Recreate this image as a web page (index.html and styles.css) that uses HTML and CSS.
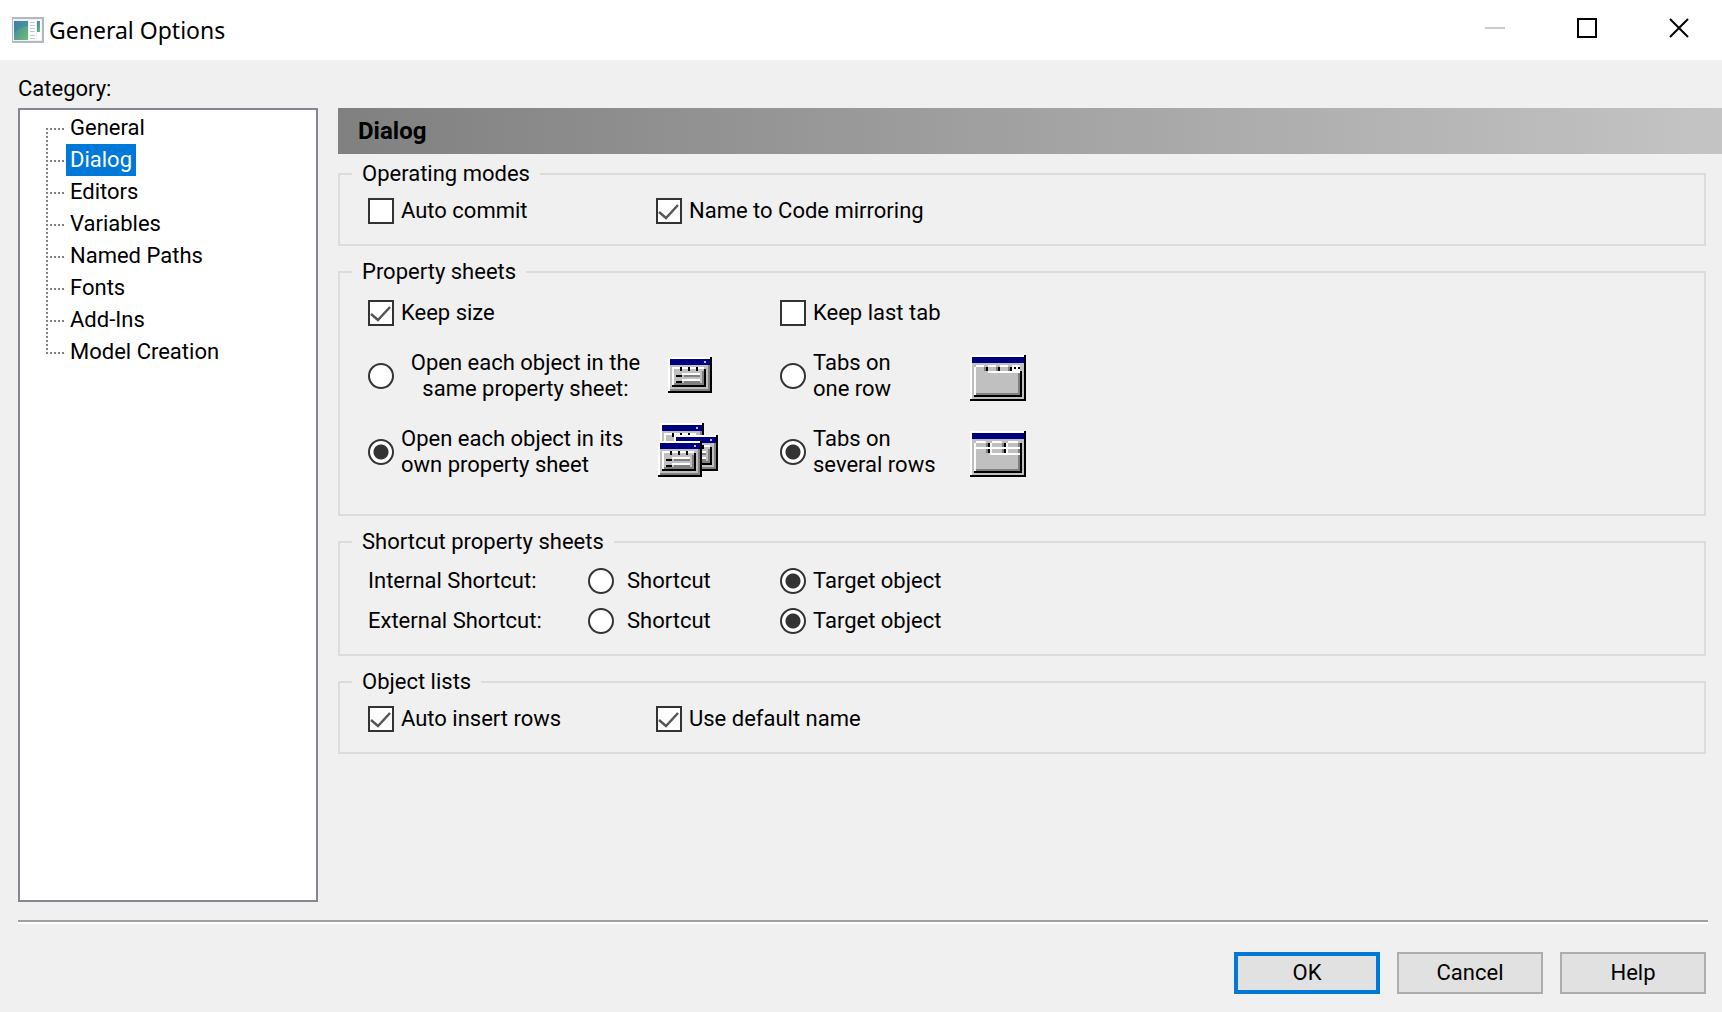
FILE: index.html
```html
<!DOCTYPE html>
<html lang="en">
<head>
<meta charset="utf-8">
<title>General Options</title>
<link rel="stylesheet" href="styles.css">
</head>
<body>
<svg class="sprites" width="0" height="0" aria-hidden="true">
  <defs>
    <g id="sheet">
      <path fill="#c0c0c0" d="M0 0h22v18H0z"/>
      <path fill="#fff" d="M0 0h21v1H0zM0 0h1v17H0zM2 5h16v1H2zM2 5h1v9H2zM7 8h9v1H7zM7 11h9v1H7z"/>
      <path fill="#000080" d="M1 1h20v3H1z"/>
      <path fill="#c0c0c0" d="M18 2h1v1h-1z"/>
      <path fill="#808080" d="M20 4h1v13h-1zM1 16h20v1H1zM17 7h1v7h-1zM3 13h15v1H3zM8 9h8v1H8zM8 12h8v1H8z"/>
      <path fill="#000" d="M21 0h1v18h-1zM0 17h22v1H0zM18 6h1v9h-1zM2 14h17v1H2zM6 5h1v2H6zM10 5h1v2h-1zM14 5h1v2h-1zM4 9h3v1H4zM4 12h3v1H4z"/>
    </g>
    <g id="window-frame">
      <path fill="#c0c0c0" d="M0 0h28v23H0z"/>
      <path fill="#fff" d="M0 0h27v1H0zM0 0h1v22H0zM2 6h1v14H2z"/>
      <path fill="#000080" d="M1 1h26v3H1z"/>
      <path fill="#808080" d="M24 9h1v11h-1zM3 19h22v1H3z"/>
      <path fill="#000" d="M27 0h1v23h-1zM0 22h28v1H0zM25 8h1v13h-1zM2 20h24v1H2z"/>
    </g>
  </defs>
</svg>
<div class="window">
  <header class="titlebar">
    <svg class="app-icon" width="32" height="26" viewBox="0 0 32 26" aria-hidden="true">
      <defs><linearGradient id="pane" x1="0" y1="0" x2="1" y2="1"><stop offset="0" stop-color="#3f7fb0"/><stop offset="1" stop-color="#6cc070"/></linearGradient></defs>
      <path fill="#b4b8c0" d="M0 0h32v26H0z"/>
      <path fill="#eef0f2" d="M1 2h29v22H1z"/>
      <path fill="url(#pane)" d="M2 4h14v19H2z"/>
      <path fill="#3c7fa0" opacity=".5" d="M2 4h14v5Q7 10 2 16z"/>
      <path fill="#fff" d="M17 3h7v20h-7zM25 3h4v20h-4z"/>
      <path fill="#c4c8cc" d="M18 5h5v1h-5zM18 8h5v1h-5zM18 11h5v1h-5zM18 14h5v1h-5zM18 18h5v1h-5zM18 21h5v1h-5z"/>
      <path fill="url(#pane)" d="M25 4h3v11h-3z"/>
    </svg>
    <h1 class="title">General Options</h1>
    <div class="window-controls">
      <button class="control" type="button" aria-label="Minimize" disabled><svg width="20" height="20"><path fill="#ccc" d="M0 9h20v2H0z"/></svg></button>
      <button class="control" type="button" aria-label="Maximize"><svg width="20" height="20"><path fill="none" stroke="#000" stroke-width="2" d="M1 1h18v18H1z"/></svg></button>
      <button class="control" type="button" aria-label="Close"><svg width="20" height="20"><path stroke="#000" stroke-width="2" d="M1 1l18 18M19 1L1 19"/></svg></button>
    </div>
  </header>

  <main class="content">
    <nav class="categories" aria-labelledby="category-label">
      <h2 class="category-label" id="category-label">Category:</h2>
      <ul class="tree">
        <li class="node"><a class="node-link" href="#general">General</a></li>
        <li class="node"><a class="node-link selected" href="#dialog" aria-current="page">Dialog</a></li>
        <li class="node"><a class="node-link" href="#editors">Editors</a></li>
        <li class="node"><a class="node-link" href="#variables">Variables</a></li>
        <li class="node"><a class="node-link" href="#named-paths">Named Paths</a></li>
        <li class="node"><a class="node-link" href="#fonts">Fonts</a></li>
        <li class="node"><a class="node-link" href="#add-ins">Add-Ins</a></li>
        <li class="node"><a class="node-link" href="#model-creation">Model Creation</a></li>
      </ul>
    </nav>

    <form class="panel" id="options">
      <h2 class="banner">Dialog</h2>
      <div class="groups">
        <fieldset class="group">
          <legend>Operating modes</legend>
          <div class="grid pair">
            <label class="option"><input type="checkbox">Auto commit</label>
            <label class="option"><input type="checkbox" checked>Name to Code mirroring</label>
          </div>
        </fieldset>

        <fieldset class="group">
          <legend>Property sheets</legend>
          <div class="grid sheets">
            <label class="option wide"><input type="checkbox" checked>Keep size</label>
            <label class="option wide"><input type="checkbox">Keep last tab</label>

            <label class="option"><input type="radio" name="open"><span class="centered">Open each object in the<br>same property sheet:</span></label>
            <svg class="picture" width="60" height="60" viewBox="0 0 60 60" shape-rendering="crispEdges" aria-hidden="true"><use href="#sheet" transform="translate(10 11) scale(2)"/></svg>
            <label class="option"><input type="radio" name="tabs"><span>Tabs on<br>one row</span></label>
            <svg class="picture" width="60" height="60" viewBox="0 0 60 60" shape-rendering="crispEdges" aria-hidden="true">
              <g transform="translate(0 9) scale(2)">
                <use href="#window-frame"/>
                <path fill="#fff" d="M3 5h4v1H3zM9 5h4v1H9zM15 5h4v1h-4zM21 5h4v3h-4zM9 8h16v1H9z"/>
                <path fill="#808080" d="M7 6h1v2H7zM13 6h1v2h-1zM19 6h1v2h-1z"/>
                <path fill="#000" d="M8 6h1v2H8zM14 6h1v2h-1zM20 6h1v2h-1zM22 6h1v1h-1zM24 6h1v1h-1z"/>
              </g>
            </svg>

            <label class="option"><input type="radio" name="open" checked><span>Open each object in its<br>own property sheet</span></label>
            <svg class="picture" width="60" height="60" viewBox="0 0 60 60" shape-rendering="crispEdges" aria-hidden="true">
              <g transform="translate(0 1) scale(2)"><use href="#sheet" x="1"/><use href="#sheet" x="8" y="6"/><use href="#sheet" y="9"/></g>
            </svg>
            <label class="option"><input type="radio" name="tabs" checked><span>Tabs on<br>several rows</span></label>
            <svg class="picture" width="60" height="60" viewBox="0 0 60 60" shape-rendering="crispEdges" aria-hidden="true">
              <g transform="translate(0 9) scale(2)">
                <use href="#window-frame"/>
                <path fill="#fff" d="M3 5h5v1H3zM11 5h5v1h-5zM19 5h5v1h-5zM10 6h1v2h-1zM18 6h1v2h-1zM3 8h22v1H3zM10 9h1v3h-1zM18 9h1v2h-1zM10 11h15v1H10z"/>
                <path fill="#808080" d="M8 6h1v2H8zM16 6h1v2h-1zM24 6h1v2h-1zM8 9h1v2H8zM16 9h1v2h-1zM24 9h1v2h-1z"/>
                <path fill="#000" d="M9 6h1v2H9zM17 6h1v2h-1zM25 6h1v2h-1zM9 9h1v2H9zM17 9h1v2h-1z"/>
              </g>
            </svg>
          </div>
        </fieldset>

        <fieldset class="group">
          <legend>Shortcut property sheets</legend>
          <div class="grid shortcuts">
            <span class="row-label" id="internal">Internal Shortcut:</span>
            <label class="option spaced"><input type="radio" name="internal" aria-describedby="internal">Shortcut</label>
            <label class="option"><input type="radio" name="internal" aria-describedby="internal" checked>Target object</label>
            <span class="row-label" id="external">External Shortcut:</span>
            <label class="option spaced"><input type="radio" name="external" aria-describedby="external">Shortcut</label>
            <label class="option"><input type="radio" name="external" aria-describedby="external" checked>Target object</label>
          </div>
        </fieldset>

        <fieldset class="group">
          <legend>Object lists</legend>
          <div class="grid pair">
            <label class="option"><input type="checkbox" checked>Auto insert rows</label>
            <label class="option"><input type="checkbox" checked>Use default name</label>
          </div>
        </fieldset>
      </div>
    </form>
  </main>

  <footer class="actions">
    <button class="button primary" type="submit" form="options">OK</button>
    <button class="button" type="button">Cancel</button>
    <button class="button" type="button">Help</button>
  </footer>
</div>
</body>
</html>
```
FILE: styles.css
```css
* { box-sizing: border-box; }

body {
  margin: 0;
  background: #f0f0f0;
  color: #000;
  font: 22px/26px Roboto, "Liberation Sans", Arial, sans-serif;
}

.sprites { position: absolute; }

.window {
  display: flex;
  flex-direction: column;
  min-height: 100vh;
}

/* Title bar */
.titlebar {
  display: flex;
  align-items: center;
  height: 60px;
  padding-left: 12px;
  background: #fff;
}

.title {
  margin: 0 0 0 5px;
  font: 23px/30px "Noto Sans", "Open Sans", sans-serif;
}

.window-controls {
  display: flex;
  align-self: flex-start;
  gap: 6px;
  margin-left: auto;
}

.control {
  display: flex;
  align-items: center;
  justify-content: center;
  width: 86px;
  height: 56px;
  padding: 0;
  border: 0;
  background: none;
}

/* Body */
.content {
  display: grid;
  grid-template-columns: 300px 1fr;
  gap: 20px;
  flex: 1;
  padding: 14px 0 18px 18px;
}

.categories {
  display: flex;
  flex-direction: column;
}

.category-label {
  margin: 0;
  padding-bottom: 4px;
  font-size: 22px;
  font-weight: 400;
  line-height: 30px;
}

.tree {
  flex: 1;
  margin: 0;
  padding: 2px 0 0 26px;
  border: 2px solid #828790;
  background: #fff;
  list-style: none;
}

.node {
  display: flex;
  align-items: center;
  height: 32px;
  background:
    repeating-linear-gradient(to bottom, #808080 0 2px, transparent 2px 4px) 0 0 / 2px 100% no-repeat,
    repeating-linear-gradient(to right, #808080 0 2px, transparent 2px 4px) 0 16px / 18px 2px no-repeat;
}

.node:first-child { background-position: 0 16px, 0 16px; }
.node:last-child { background-size: 2px 16px, 18px 2px; }

.node-link {
  margin-left: 20px;
  padding: 0 4px;
  color: inherit;
  line-height: 32px;
  text-decoration: none;
}

.node-link.selected {
  background: #0078d7;
  color: #fff;
}

/* Options */
.panel { padding-top: 34px; }

.banner {
  margin: 0;
  padding: 0 20px;
  background: linear-gradient(to right, #808080, #c4c4c4);
  font-size: 24px;
  font-weight: 700;
  line-height: 46px;
}

.groups {
  display: flex;
  flex-direction: column;
  gap: 12px;
  padding: 6px 16px 0 0;
}

.group {
  margin: 0;
  padding: 10px 12px 20px;
  border: 2px solid #dcdcdc;
}

.group legend {
  padding: 0 10px;
  line-height: 28px;
}

.grid {
  display: grid;
  align-items: center;
  padding-left: 16px;
}

.pair { grid-template-columns: 288px auto; }

.sheets {
  grid-template-columns: 290px 122px 190px auto;
  grid-template-rows: 26px 52px 52px;
  row-gap: 24px;
  padding: 4px 0 16px 16px;
}

.shortcuts {
  grid-template-columns: 220px 192px auto;
  row-gap: 14px;
  padding-top: 2px;
}

.wide { grid-column: span 2; }

.option {
  display: flex;
  align-items: center;
  gap: 7px;
}

.spaced { gap: 13px; }

.centered {
  flex: 1;
  margin-right: 8px;
  text-align: center;
}

.picture { display: block; }

input {
  flex: none;
  width: 26px;
  height: 26px;
  margin: 0;
  border: 2px solid #333;
  background: #fff;
  appearance: none;
}

input[type="checkbox"]:checked {
  background: #fff url("data:image/svg+xml,%3Csvg xmlns='http://www.w3.org/2000/svg' width='22' height='22'%3E%3Cpath d='M1 12L8 18L20 5' fill='none' stroke='%23555' stroke-width='2.4'/%3E%3C/svg%3E") center no-repeat;
}

input[type="radio"] { border-radius: 50%; }

input[type="radio"]:checked {
  background: radial-gradient(circle, #333 0 7px, #fff 8px);
}

/* Footer */
.actions {
  display: flex;
  justify-content: flex-end;
  gap: 17px;
  margin: 0 14px 0 18px;
  padding: 30px 2px 18px;
  border-top: 2px solid #a0a0a0;
  box-shadow: inset 0 2px #fff;
}

.button {
  width: 146px;
  height: 42px;
  padding: 0;
  border: 2px solid #adadad;
  background: #e1e1e1;
  color: inherit;
  font: inherit;
}

.button.primary { border: 4px solid #0078d7; }
```
